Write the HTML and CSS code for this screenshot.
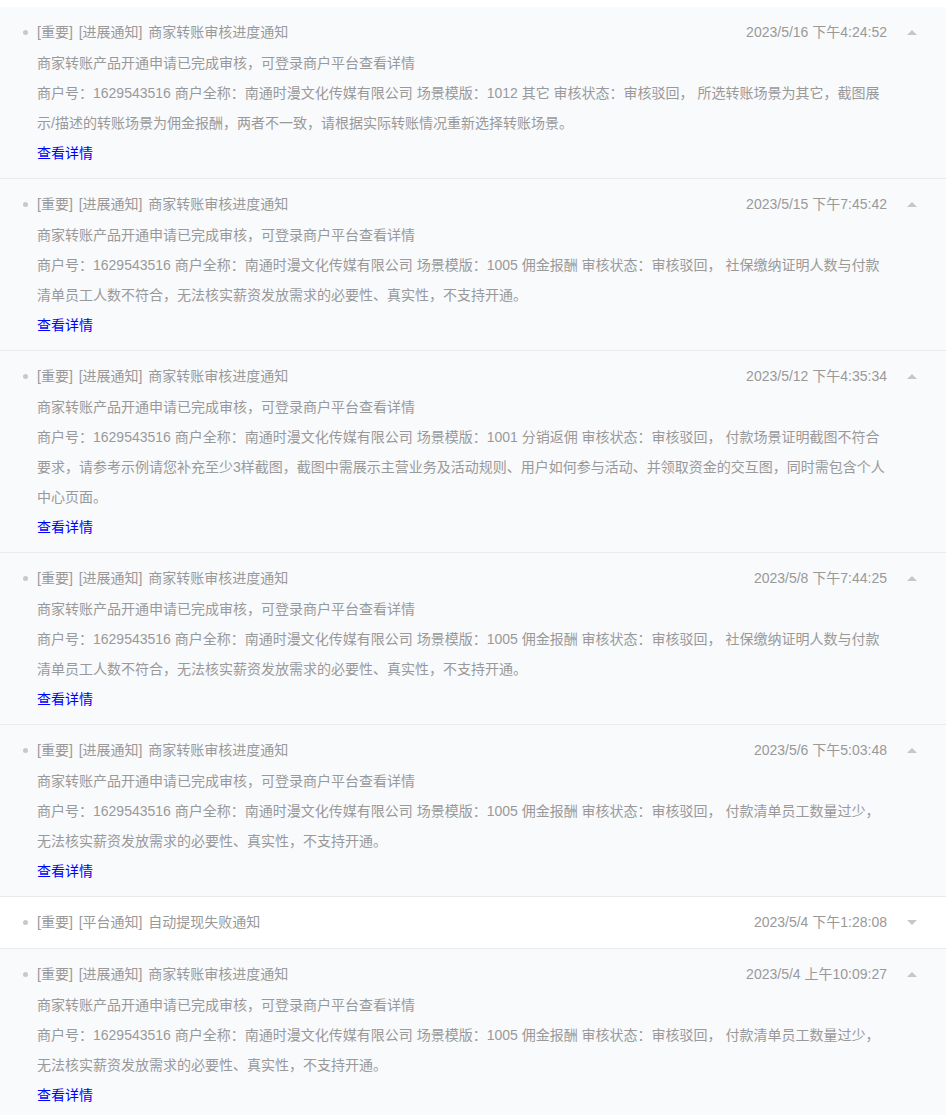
FILE: index.html
```html
<!DOCTYPE html>
<html lang="zh-CN">
<head>
<meta charset="utf-8">
<title>通知列表</title>
<link rel="stylesheet" href="styles.css">
</head>
<body>
<div class="list">
  <div class="item open">
    <span class="dot"></span>
    <div class="main">
      <div class="head"><span class="title"><span class="tag">[重要]</span> <span class="tag">[进展通知]</span> 商家转账审核进度通知</span><span class="time">2023/5/16 下午4:24:52</span></div>
      <div class="body">
        <p>商家转账产品开通申请已完成审核，可登录商户平台查看详情</p>
        <p>商户号：1629543516 商户全称：南通时漫文化传媒有限公司 场景模版：1012 其它 审核状态：审核驳回， 所选转账场景为其它，截图展示/描述的转账场景为佣金报酬，两者不一致，请根据实际转账情况重新选择转账场景。</p>
        <a class="link" href="#">查看详情</a>
      </div>
    </div>
    <span class="arrow up"></span>
  </div>
  <div class="item open">
    <span class="dot"></span>
    <div class="main">
      <div class="head"><span class="title"><span class="tag">[重要]</span> <span class="tag">[进展通知]</span> 商家转账审核进度通知</span><span class="time">2023/5/15 下午7:45:42</span></div>
      <div class="body">
        <p>商家转账产品开通申请已完成审核，可登录商户平台查看详情</p>
        <p>商户号：1629543516 商户全称：南通时漫文化传媒有限公司 场景模版：1005 佣金报酬 审核状态：审核驳回， 社保缴纳证明人数与付款清单员工人数不符合，无法核实薪资发放需求的必要性、真实性，不支持开通。</p>
        <a class="link" href="#">查看详情</a>
      </div>
    </div>
    <span class="arrow up"></span>
  </div>
  <div class="item open">
    <span class="dot"></span>
    <div class="main">
      <div class="head"><span class="title"><span class="tag">[重要]</span> <span class="tag">[进展通知]</span> 商家转账审核进度通知</span><span class="time">2023/5/12 下午4:35:34</span></div>
      <div class="body">
        <p>商家转账产品开通申请已完成审核，可登录商户平台查看详情</p>
        <p>商户号：1629543516 商户全称：南通时漫文化传媒有限公司 场景模版：1001 分销返佣 审核状态：审核驳回， 付款场景证明截图不符合要求，请参考示例请您补充至少3样截图，截图中需展示主营业务及活动规则、用户如何参与活动、并领取资金的交互图，同时需包含个人中心页面。</p>
        <a class="link" href="#">查看详情</a>
      </div>
    </div>
    <span class="arrow up"></span>
  </div>
  <div class="item open">
    <span class="dot"></span>
    <div class="main">
      <div class="head"><span class="title"><span class="tag">[重要]</span> <span class="tag">[进展通知]</span> 商家转账审核进度通知</span><span class="time">2023/5/8 下午7:44:25</span></div>
      <div class="body">
        <p>商家转账产品开通申请已完成审核，可登录商户平台查看详情</p>
        <p>商户号：1629543516 商户全称：南通时漫文化传媒有限公司 场景模版：1005 佣金报酬 审核状态：审核驳回， 社保缴纳证明人数与付款清单员工人数不符合，无法核实薪资发放需求的必要性、真实性，不支持开通。</p>
        <a class="link" href="#">查看详情</a>
      </div>
    </div>
    <span class="arrow up"></span>
  </div>
  <div class="item open">
    <span class="dot"></span>
    <div class="main">
      <div class="head"><span class="title"><span class="tag">[重要]</span> <span class="tag">[进展通知]</span> 商家转账审核进度通知</span><span class="time">2023/5/6 下午5:03:48</span></div>
      <div class="body">
        <p>商家转账产品开通申请已完成审核，可登录商户平台查看详情</p>
        <p>商户号：1629543516 商户全称：南通时漫文化传媒有限公司 场景模版：1005 佣金报酬 审核状态：审核驳回， 付款清单员工数量过少，无法核实薪资发放需求的必要性、真实性，不支持开通。</p>
        <a class="link" href="#">查看详情</a>
      </div>
    </div>
    <span class="arrow up"></span>
  </div>
  <div class="item">
    <span class="dot"></span>
    <div class="main">
      <div class="head"><span class="title"><span class="tag">[重要]</span> <span class="tag">[平台通知]</span> 自动提现失败通知</span><span class="time">2023/5/4 下午1:28:08</span></div>
    </div>
    <span class="arrow down"></span>
  </div>
  <div class="item open">
    <span class="dot"></span>
    <div class="main">
      <div class="head"><span class="title"><span class="tag">[重要]</span> <span class="tag">[进展通知]</span> 商家转账审核进度通知</span><span class="time">2023/5/4 上午10:09:27</span></div>
      <div class="body">
        <p>商家转账产品开通申请已完成审核，可登录商户平台查看详情</p>
        <p>商户号：1629543516 商户全称：南通时漫文化传媒有限公司 场景模版：1005 佣金报酬 审核状态：审核驳回， 付款清单员工数量过少，无法核实薪资发放需求的必要性、真实性，不支持开通。</p>
        <a class="link" href="#">查看详情</a>
      </div>
    </div>
    <span class="arrow up"></span>
  </div>
</div>
</body>
</html>
```

FILE: styles.css
```css
html, body {
  margin: 0;
  padding: 0;
  background: #ffffff;
}

body {
  font-family: "Liberation Sans", Arial, "Noto Sans CJK SC", sans-serif;
  font-size: 14px;
  color: #999999;
}

.list {
  padding-top: 7px;
}

.item {
  display: grid;
  grid-template-columns: 37px 1fr 59px;
  align-items: start;
  padding: 10px 0;
  border-bottom: 1px solid #e8eaee;
  background: #ffffff;
}

.item.open {
  background: #f9fafc;
}

.dot {
  width: 5px;
  height: 5px;
  border-radius: 50%;
  background: #c9c9c9;
  margin: 13px 0 0 23px;
}

.main {
  min-width: 0;
}

.head {
  display: flex;
  justify-content: space-between;
  line-height: 31px;
}

.title,
.time {
  color: #999999;
}

.tag {
  margin-right: 2px;
}

.body {
  line-height: 30px;
}

.body p {
  margin: 0;
  color: #999999;
}

.link {
  display: inline-block;
  color: #0000ff;
  text-decoration: none;
}

.arrow {
  width: 0;
  height: 0;
  margin: 13px 0 0 20px;
  border-left: 5px solid transparent;
  border-right: 5px solid transparent;
}

.arrow.up {
  border-bottom: 5px solid #c4c7cc;
}

.arrow.down {
  border-top: 5px solid #c4c7cc;
}
```
